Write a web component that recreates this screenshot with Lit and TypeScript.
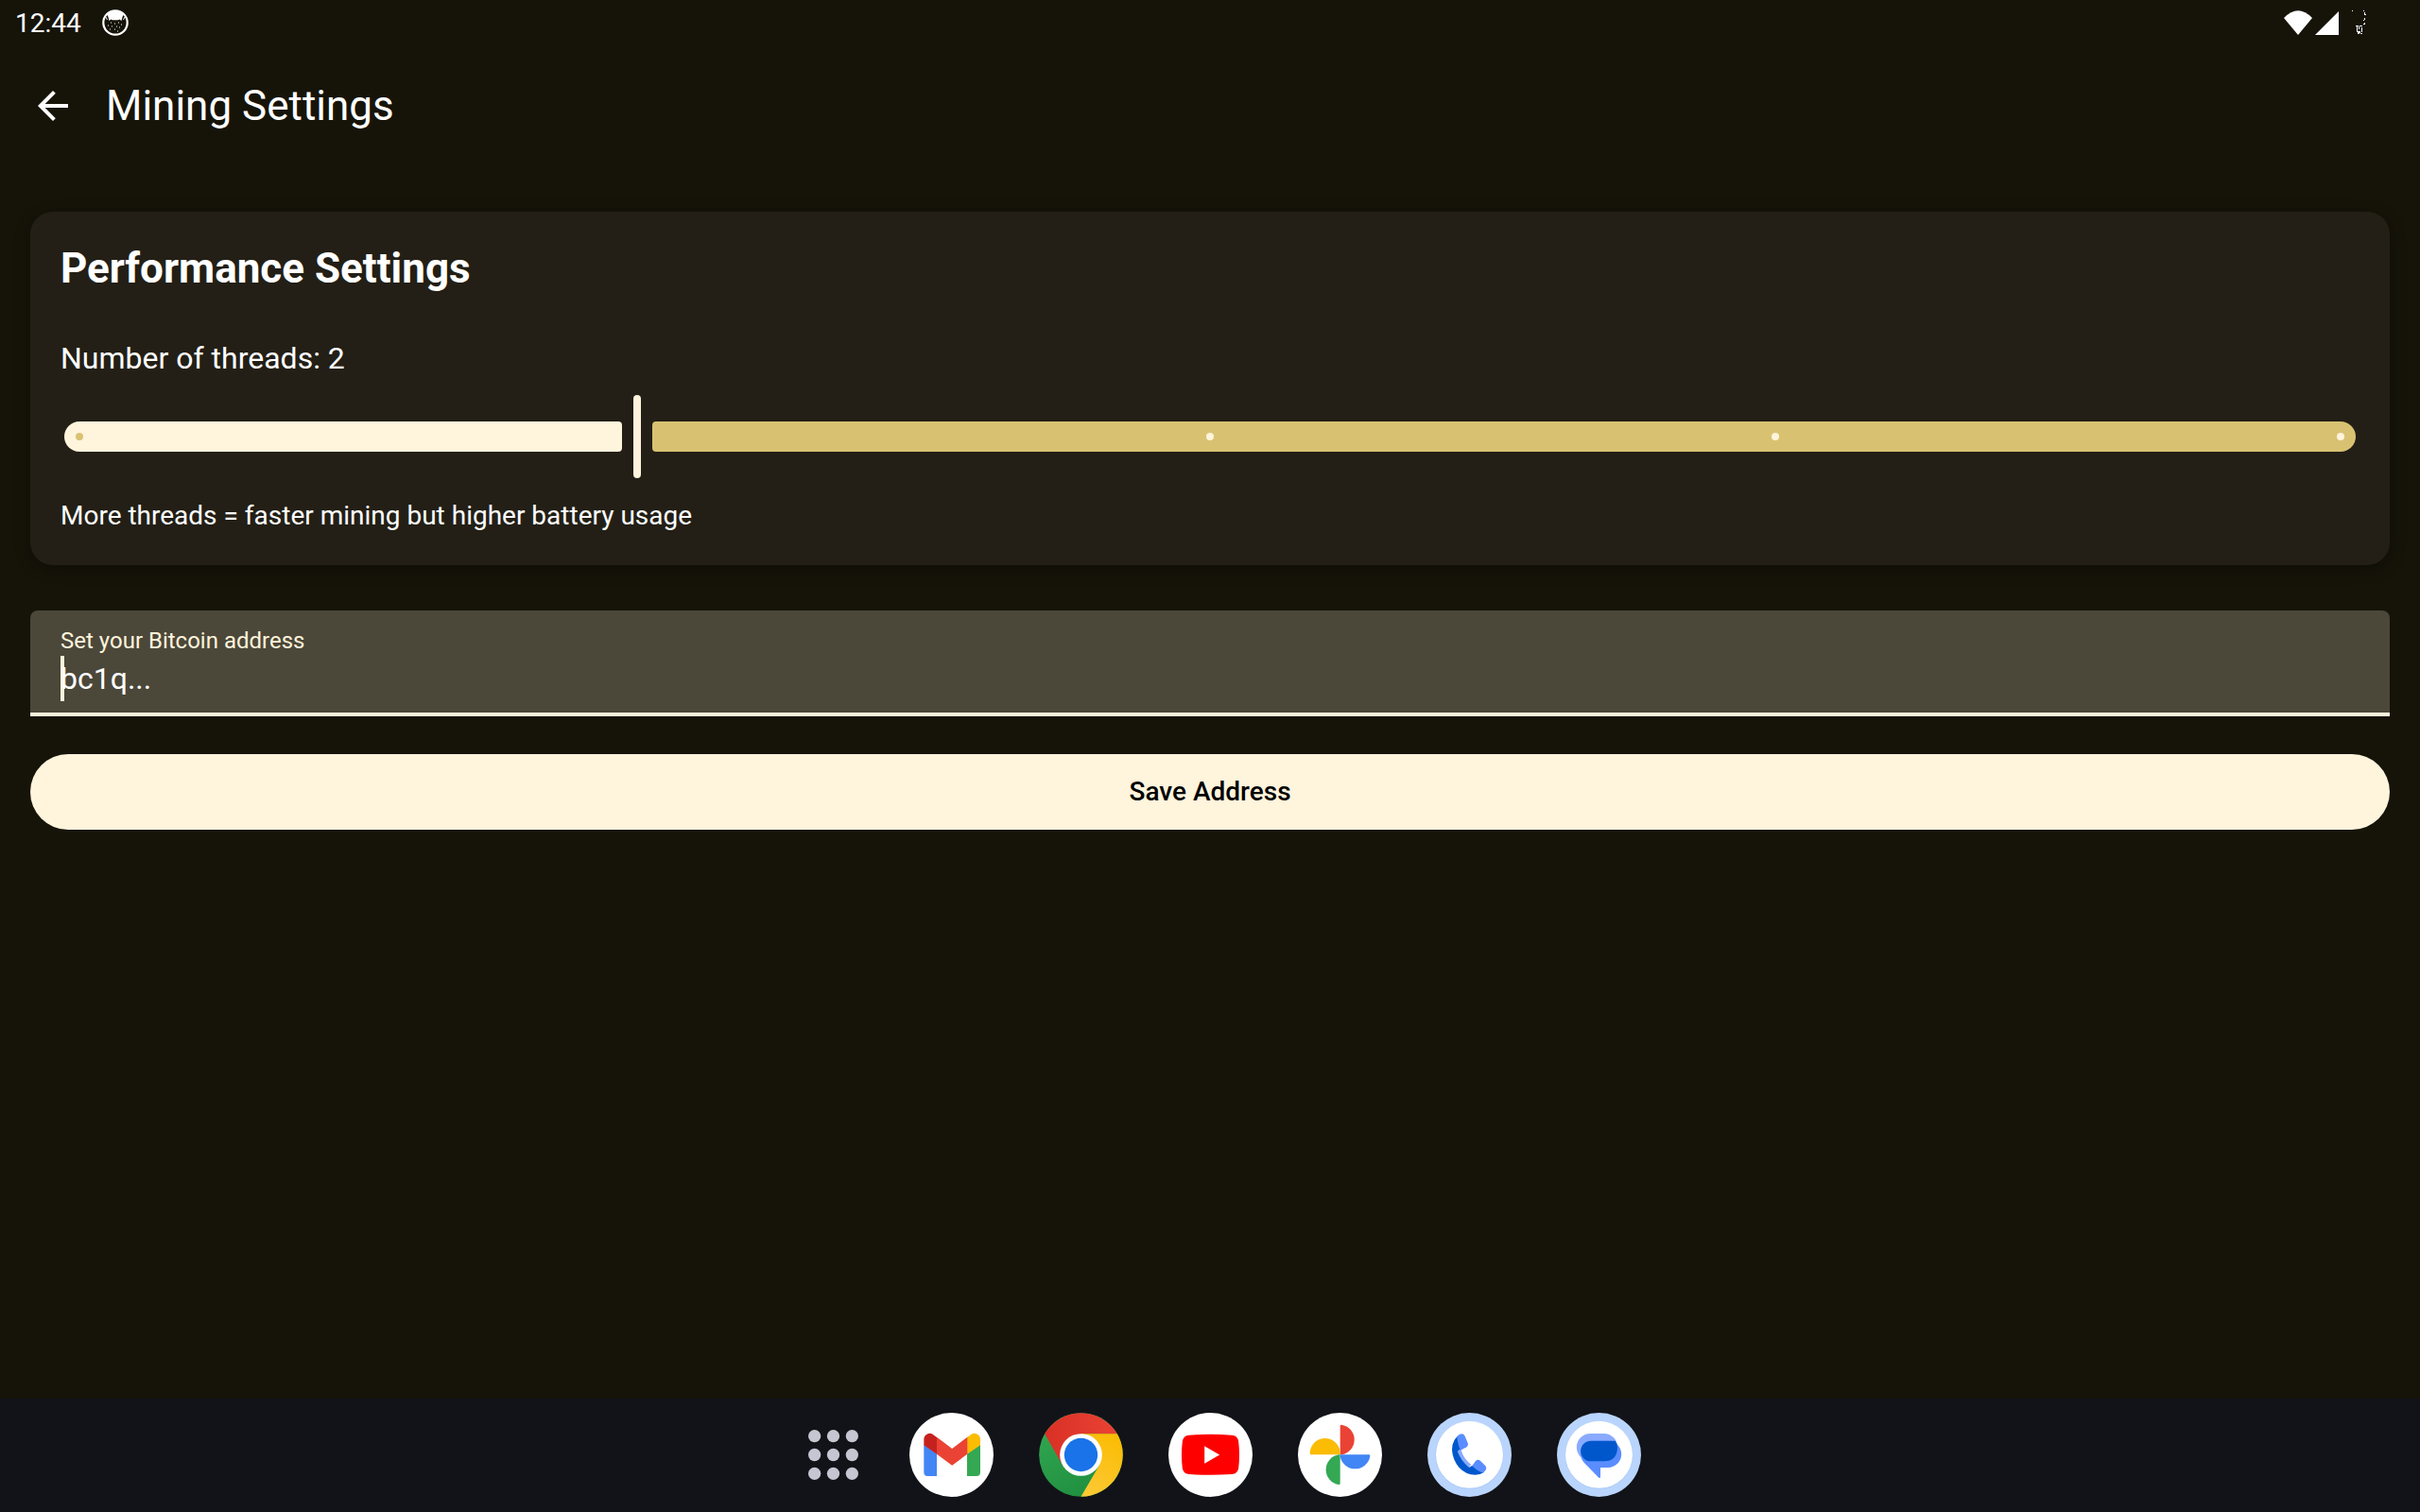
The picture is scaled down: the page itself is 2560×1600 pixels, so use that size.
import { LitElement, html, css, svg } from "lit";
import { customElement, state } from "lit/decorators.js";
import { classMap } from "lit/directives/class-map.js";

const MIN_THREADS = 1;
const MAX_THREADS = 5;

const gmailIcon = svg`
  <circle cx="499.5" cy="208.5" r="133.5" fill="#fff"/>
  <path d="M412 176L453 205V276H424Q412 276 412 264Z" fill="#4285f4"/>
  <path d="M591 176L549 205V276H579Q591 276 591 264Z" fill="#34a853"/>
  <path d="M412 178V160A18.500 18.500 0 0 1 441 144L453 153V206Z" fill="#c5221f"/>
  <path d="M591 178V160A18.500 18.500 0 0 0 562 144L549 153V206Z" fill="#fbbc04"/>
  <path d="M453 152L501.500 189L550 152V206L501.500 242L453 206Z" fill="#ea4335"/>`;

const chromeIcon = svg`
  <defs>
    <linearGradient id="cr" x1="0" x2="1"><stop offset="0" stop-color="#d93025"/><stop offset="1" stop-color="#ea4335"/></linearGradient>
    <linearGradient id="cy" x1="0.700" y1="0" x2="0.300" y2="1"><stop offset="0" stop-color="#fbbc04"/><stop offset="1" stop-color="#fcc934"/></linearGradient>
    <linearGradient id="cg" x1="0.200" y1="0" x2="0.700" y2="1"><stop offset="0" stop-color="#34a853"/><stop offset="1" stop-color="#1e8e3e"/></linearGradient>
  </defs>
  <circle cx="911" cy="208.5" r="133" fill="url(#cg)"/>
  <path d="M796 142A133 133 0 0 1 1026 142H911L853 242Z" fill="url(#cr)"/>
  <path d="M911 142H1026A133 133 0 0 1 911 341.500L969 242Z" fill="url(#cy)"/>
  <circle cx="911" cy="208.5" r="67" fill="#fff"/>
  <circle cx="911" cy="208.5" r="53" fill="#1a73e8"/>`;

const youtubeIcon = svg`
  <circle cx="242" cy="208.5" r="133.5" fill="#fff"/>
  <path d="M174 146Q242 141 310 146Q328 147 331 166Q336 208 331 251Q328 268 310 270Q242 275 174 270Q156 268 153 251Q148 208 153 166Q156 147 174 146Z" fill="#f00"/>
  <path d="M223 181L271 208.500L223 236Z" fill="#fff"/>`;

const photosIcon = svg`
  <circle cx="652.5" cy="208.5" r="133.5" fill="#fff"/>
  <path d="M653 208V117Q653 113 657 113A48 48 0 0 1 657 208Z" fill="#ea4335"/>
  <path d="M653 208H561Q557 208 557 204A48 48 0 0 1 653 204Z" fill="#fbbc04"/>
  <path d="M653 208V299Q653 303 649 303A48 48 0 0 1 649 208Z" fill="#34a853"/>
  <path d="M653 208H744Q748 208 748 212A48 48 0 0 1 653 212Z" fill="#4285f4"/>`;

const phoneIcon = svg`
  <circle cx="223.5" cy="208.5" r="133.500" fill="#b9d5fd"/>
  <circle cx="223.5" cy="209.5" r="108" fill="#a9c9f5"/>
  <circle cx="223.5" cy="208" r="106.500" fill="#fff"/>
  <path d="M190 192L197 195Q205 224 229 240L219 249Q192 228 184 199Z" fill="#89aaff"/>
  <path d="M186 149Q168 165 168 193Q170 225 190 248Q212 272 242 272Q258 272 269 264L232 243L222 248Q200 230 186 198L196 193Z" fill="#0057cc"/>
  <path d="M190 192L197 195Q205 220 227 239L219 246Q196 226 186 198Z" fill="#89aaff"/>
  <path d="M184 150Q191 143 198 142Q206 142 209 149L218 171Q221 179 214 184L195 194Q186 178 184 150Z" fill="#5a8dff"/>
  <path d="M232 243L243 228Q249 222 256 226L273 242Q280 250 274 258L267 266Q246 259 232 243Z" fill="#5a8dff"/>`;

const messagesIcon = svg`
  <circle cx="634.5" cy="208.5" r="133.500" fill="#b9d5fd"/>
  <circle cx="634.5" cy="209.5" r="108" fill="#a9c9f5"/>
  <circle cx="634.5" cy="208" r="106.500" fill="#fff"/>
  <path d="M607 141H650A43.500 43.500 0 0 1 650 228H607A43.500 43.500 0 0 1 607 141Z" fill="#89aaff"/>
  <path d="M609 164H663A42.500 42.500 0 0 1 663 249H639V279Q638 284 634 281L585 231Q560 195 609 164Z" fill="#5a8dff"/>
  <path d="M609 164H686Q693 173 693 185Q692 228 650 229H609A32.500 32.500 0 0 1 609 164Z" fill="#0057cc"/>`;

const dockApps = [
  { name: "Gmail", box: "366 75 267 267", art: gmailIcon },
  { name: "Chrome", box: "777.5 75 267 267", art: chromeIcon },
  { name: "YouTube", box: "108.5 75 267 267", art: youtubeIcon },
  { name: "Photos", box: "519 75 267 267", art: photosIcon },
  { name: "Phone", box: "90 75 267 267", art: phoneIcon },
  { name: "Messages", box: "501 75 267 267", art: messagesIcon },
];

@customElement("status-bar")
export class StatusBar extends LitElement {
  static styles = css`
    :host {
      display: flex;
      align-items: center;
      justify-content: space-between;
      height: 48px;
      padding: 0 52px 0 16px;
      color: #fff;
    }
    .group {
      display: flex;
      align-items: center;
      gap: 21px;
    }
    .time {
      padding-top: 2px;
      font-size: 28px;
      line-height: 46px;
    }
    svg {
      display: block;
    }
  `;

  render() {
    return html`
      <div class="group">
        <time class="time">12:44</time>
        <svg width="30" height="30" viewBox="0 0 30 30" aria-hidden="true">
          <circle cx="15" cy="15" r="12.700" fill="none" stroke="#fff" stroke-width="2.200"/>
          <path d="M6 6Q15-1 24 6L22.500 9L21.500 13L19.500 11.500L18 12.300H12L10.500 11.500L8.500 13L7.500 9Z" fill="#fff"/>
          <path d="M5 9L6.500 12M25 9L23.500 12" stroke="#fff"/>
          <path d="M10 15h1M14 16h1M18 15h1M21 17h1M7 18h1M11 19h1M16 19h1M19 20h1M9 22h1M14 22h1M17 24h1" stroke="#fff" fill="none"/>
        </svg>
      </div>
      <svg width="92" height="30" viewBox="0 0 92 30" fill="#fff" aria-hidden="true">
        <path d="M0 10Q15-5.500 30 10L15 28Z"/>
        <path d="M33 28L58 3V28Z"/>
        <path d="M72 2h1v1h-1zM84 2h1v1h-1zM85 4h1v3h-1zM86 6h1v1h-1zM85 10h1v2h-1zM84 12h1v1h-1zM85 15h1v2h-1zM84 16h1v1h-1z"/>
        <path d="M76 18h3v1h-3zM77 19h1v6h-1zM78 24h2v3h-2zM80 18h3v1h-3zM79 19h1v3h-1zM82 20h1v5h-1zM81 26h2v1h-2zM80 24h1v2h-1z"/>
      </svg>
    `;
  }
}

@customElement("thread-slider")
export class ThreadSlider extends LitElement {
  static styles = css`
    :host {
      display: flex;
      flex-direction: column;
      gap: 15px;
    }
    .label {
      font-size: 32px;
      line-height: 48px;
    }
    .slider {
      display: grid;
      align-items: center;
      height: 88px;
    }
    .track,
    .ticks,
    .range {
      grid-area: 1 / 1;
    }
    .track {
      display: flex;
      gap: 32px;
      height: 32px;
      margin: 0 4px;
    }
    .active {
      box-sizing: border-box;
      border-radius: 16px 4px 4px 16px;
      background: #fff4dc;
    }
    .inactive {
      flex: 1;
      border-radius: 4px 16px 16px 4px;
      background: #d8c272;
    }
    .ticks {
      display: flex;
      justify-content: space-between;
      margin: 0 16px;
    }
    .tick {
      width: 8px;
      height: 8px;
      border-radius: 50%;
      background: #fff4dc;
    }
    .tick.filled {
      background: #d8c272;
    }
    .tick.current {
      visibility: hidden;
    }
    .range {
      appearance: none;
      width: 100%;
      height: 88px;
      margin: 0;
      background: transparent;
      outline: none;
    }
    .range::-webkit-slider-runnable-track {
      height: 88px;
      background: transparent;
    }
    .range::-webkit-slider-thumb {
      appearance: none;
      width: 8px;
      height: 88px;
      border: 0;
      border-radius: 4px;
      background: #fff4dc;
    }
  `;

  @state() private threads = 2;

  private onInput(event: Event) {
    this.threads = Number((event.target as HTMLInputElement).value);
  }

  render() {
    const share = ((this.threads - MIN_THREADS) / (MAX_THREADS - MIN_THREADS)) * 100;
    const steps = Array.from({ length: MAX_THREADS - MIN_THREADS + 1 }, (_, i) => i + MIN_THREADS);
    return html`
      <label class="label" for="threads">Number of threads: ${this.threads}</label>
      <div class="slider">
        <div class="track">
          <div class="active" style="width: calc(${share}% - 16px)"></div>
          <div class="inactive"></div>
        </div>
        <div class="ticks">
          ${steps.map(
            (step) => html`<span
              class=${classMap({
                tick: true,
                filled: step < this.threads,
                current: step === this.threads,
              })}
            ></span>`
          )}
        </div>
        <input
          class="range"
          id="threads"
          type="range"
          min=${MIN_THREADS}
          max=${MAX_THREADS}
          step="1"
          .value=${String(this.threads)}
          @input=${this.onInput}
        />
      </div>
    `;
  }
}

@customElement("address-form")
export class AddressForm extends LitElement {
  static styles = css`
    .form {
      display: flex;
      flex-direction: column;
      gap: 40px;
    }
    .field {
      display: flex;
      flex-direction: column;
      padding: 16px 32px 12px;
      border-radius: 8px 8px 0 0;
      background: #4b4739;
      box-shadow: inset 0 -4px #fff4dc;
    }
    .label {
      color: #fff4dc;
      font-size: 24px;
      line-height: 32px;
    }
    .entry {
      display: grid;
      padding-bottom: 4px;
    }
    .caret,
    .input {
      grid-area: 1 / 1;
    }
    .caret {
      width: 4px;
      height: 48px;
      background: #fff4dc;
    }
    .input {
      width: 100%;
      height: 48px;
      margin: 0;
      padding: 0;
      border: 0;
      outline: none;
      background: transparent;
      color: #fff;
      caret-color: transparent;
      font: inherit;
      font-size: 32px;
      line-height: 48px;
    }
    .input::placeholder {
      color: #fff;
      opacity: 1;
    }
    .save {
      height: 80px;
      border: 0;
      border-radius: 40px;
      background: #fff4dc;
      color: #000;
      font: inherit;
      font-size: 28px;
      font-weight: 500;
      line-height: 40px;
    }
  `;

  render() {
    return html`
      <form class="form" @submit=${(e: Event) => e.preventDefault()}>
        <div class="field">
          <label class="label" for="address">Set your Bitcoin address</label>
          <div class="entry">
            <span class="caret"></span>
            <input class="input" id="address" type="text" placeholder="bc1q..." autocomplete="off" />
          </div>
        </div>
        <button class="save" type="submit">Save Address</button>
      </form>
    `;
  }
}

@customElement("app-dock")
export class AppDock extends LitElement {
  static styles = css`
    .dock {
      display: flex;
      align-items: center;
      justify-content: center;
      gap: 24px;
      padding: 15px 0 16px;
      background: #121318;
    }
    .apps {
      display: flex;
      gap: 48px;
    }
    .button {
      display: flex;
      align-items: center;
      justify-content: center;
      width: 89px;
      height: 89px;
      padding: 0;
      border: 0;
      background: transparent;
    }
    .button.drawer {
      width: 114px;
    }
  `;

  render() {
    return html`
      <nav class="dock">
        <button class="button drawer" aria-label="All apps">
          <svg width="53" height="53" viewBox="0 0 53 53" fill="#c6c5d2">
            ${[0, 1, 2].map((row) =>
              [0, 1, 2].map(
                (col) => svg`<circle cx=${6.65 + col * 19.85} cy=${6.65 + row * 19.85} r="6.65"/>`
              )
            )}
          </svg>
        </button>
        <div class="apps">
          ${dockApps.map(
            (app) => html`<button class="button" aria-label=${app.name}>
              <svg width="89" height="89" viewBox=${app.box}>${app.art}</svg>
            </button>`
          )}
        </div>
      </nav>
    `;
  }
}

@customElement("app-root")
export class AppRoot extends LitElement {
  static styles = css`
    :host {
      display: flex;
      flex-direction: column;
      min-height: 100vh;
      background: #161409;
      color: #fff;
      font-family: Roboto, "Liberation Sans", sans-serif;
    }
    .bar {
      display: flex;
      align-items: center;
      gap: 32px;
      height: 128px;
      padding: 0 32px;
    }
    .back {
      display: flex;
      padding: 0;
      border: 0;
      background: transparent;
      color: #fff;
    }
    .title {
      margin: 0;
      font-size: 44px;
      font-weight: 400;
      line-height: 56px;
    }
    .content {
      display: flex;
      flex: 1;
      flex-direction: column;
      gap: 48px;
      padding: 48px 32px;
    }
    .card {
      display: flex;
      flex-direction: column;
      padding: 32px;
      border-radius: 24px;
      background: #231f16;
      box-shadow: 0 4px 16px rgba(0, 0, 0, 0.35);
    }
    .heading {
      margin: 0 0 43px;
      font-size: 44px;
      font-weight: 700;
      line-height: 56px;
    }
    .hint {
      margin: 20px 0 0;
      font-size: 28px;
      line-height: 40px;
    }
  `;

  render() {
    return html`
      <status-bar></status-bar>
      <header class="bar">
        <button class="back" aria-label="Back">
          <svg width="48" height="48" viewBox="0 0 24 24" fill="currentColor">
            <path d="M20 11H7.830l5.590-5.590L12 4l-8 8 8 8 1.410-1.410L7.830 13H20v-2z"/>
          </svg>
        </button>
        <h1 class="title">Mining Settings</h1>
      </header>
      <main class="content">
        <section class="card">
          <h2 class="heading">Performance Settings</h2>
          <thread-slider></thread-slider>
          <p class="hint">More threads = faster mining but higher battery usage</p>
        </section>
        <address-form></address-form>
      </main>
      <app-dock></app-dock>
    `;
  }
}
